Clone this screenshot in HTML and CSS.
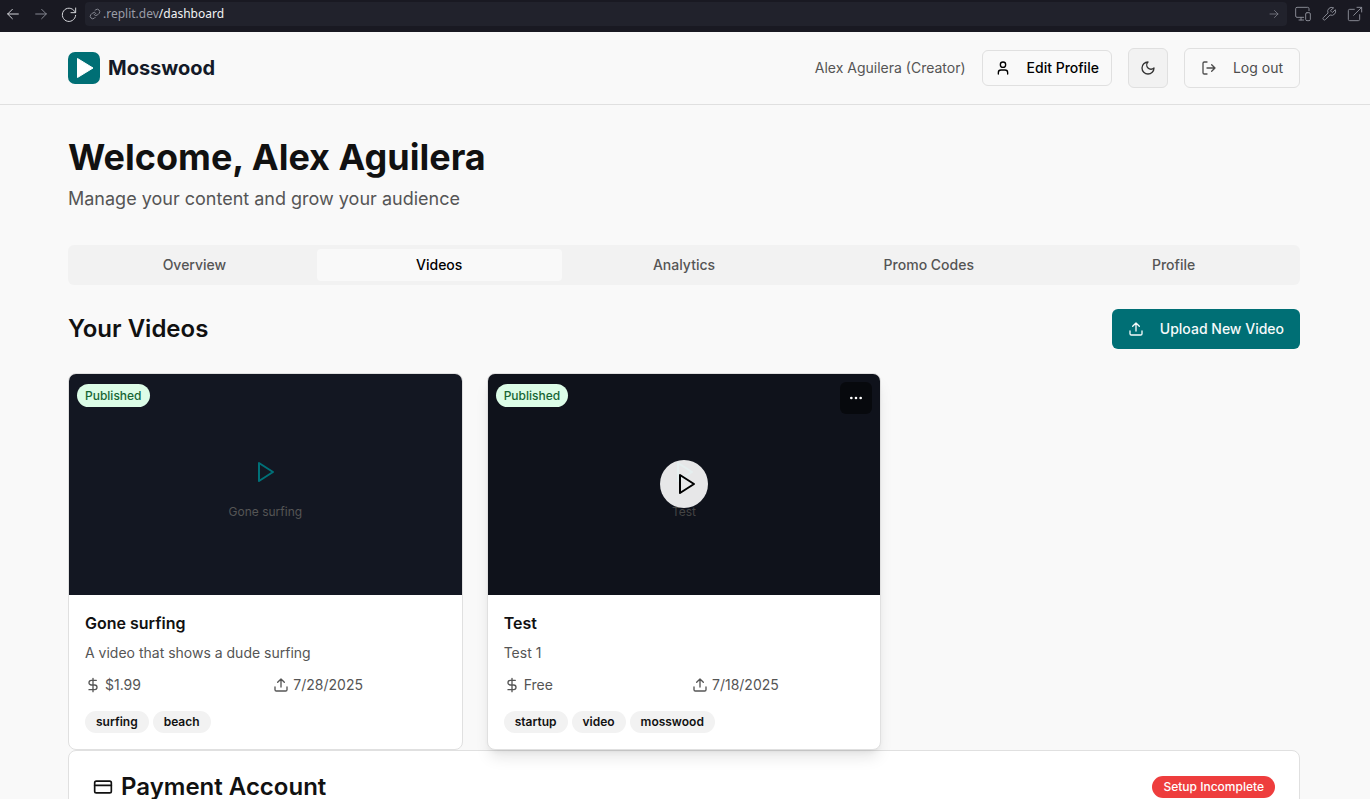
FILE: index.html
```html
<!DOCTYPE html>
<html lang="en">
<head>
<meta charset="utf-8">
<meta name="viewport" content="width=device-width, initial-scale=1">
<title>Mosswood Dashboard</title>
<link rel="stylesheet" href="styles.css">
</head>
<body>
<svg class="sprite" aria-hidden="true">
  <symbol id="play" viewBox="0 0 24 24"><polygon points="6 3 20 12 6 21 6 3"/></symbol>
  <symbol id="upload" viewBox="0 0 24 24"><path d="M12 3v12M17 8l-5-5-5 5M3 15v4a2 2 0 0 0 2 2h14a2 2 0 0 0 2-2v-4"/></symbol>
  <symbol id="dollar" viewBox="0 0 24 24"><path d="M12 2v20M17 5H9.500a3.500 3.500 0 0 0 0 7h5a3.500 3.500 0 0 1 0 7H6"/></symbol>
</svg>

<nav class="browser" aria-label="Browser">
  <button class="nav-btn" aria-label="Back"><svg class="icon bright" viewBox="0 0 24 24"><path d="M20 12H4M11 5l-7 7 7 7"/></svg></button>
  <button class="nav-btn" aria-label="Forward"><svg class="icon" viewBox="0 0 24 24"><path d="M4 12h16M13 5l7 7-7 7"/></svg></button>
  <button class="nav-btn" aria-label="Reload"><svg class="icon bright" viewBox="0 0 24 24"><path d="M22 3v7h-7"/><path d="M21.500 10A10 10 0 1 0 22 14"/></svg></button>
  <div class="address">
    <svg class="icon small" viewBox="0 0 24 24"><path d="M10 13a5 5 0 0 0 7.500.5l3-3a5 5 0 0 0-7-7l-1.700 1.700"/><path d="M14 11a5 5 0 0 0-7.500-.5l-3 3a5 5 0 0 0 7 7l1.700-1.700"/></svg>
    <span class="url">.replit.dev<span class="path">/dashboard</span></span>
    <button class="nav-btn go" aria-label="Go"><svg class="icon small" viewBox="0 0 24 24"><path d="M4 12h16M13 5l7 7-7 7"/></svg></button>
  </div>
  <div class="tools">
    <button class="nav-btn" aria-label="Devices"><svg class="icon tool" viewBox="0 0 24 24"><path d="M13 17H3a2 2 0 0 1-2-2V4a2 2 0 0 1 2-2h16a2 2 0 0 1 2 2v3M6 21h7M9 17v4"/><rect x="16" y="10" width="7" height="12" rx="2"/></svg></button>
    <button class="nav-btn" aria-label="Developer tools"><svg class="icon tool" viewBox="0 0 24 24"><path d="M14.700 6.300a1 1 0 0 0 0 1.400l1.600 1.600a1 1 0 0 0 1.400 0l3.770-3.770a6 6 0 0 1-7.940 7.940l-6.910 6.910a2.120 2.120 0 0 1-3-3l6.910-6.910a6 6 0 0 1 7.940-7.940z"/></svg></button>
    <button class="nav-btn" aria-label="Open in new tab"><svg class="icon tool" viewBox="0 0 24 24"><path d="M15 2h7v7M10 14L22 2M19 13v7a2 2 0 0 1-2 2H4a2 2 0 0 1-2-2V7a2 2 0 0 1 2-2h7"/></svg></button>
  </div>
</nav>

<div class="page">
  <header class="header">
    <a class="brand" href="#">
      <svg class="logo" viewBox="0 0 32 32"><rect width="32" height="32" rx="7"/><path d="M9.500 6.500L25 16 9.500 25.500z"/></svg>
      <span>Mosswood</span>
    </a>
    <div class="account">
      <span class="user">Alex Aguilera (Creator)</span>
      <button class="btn edit"><svg class="icon" viewBox="0 0 24 24"><circle cx="12" cy="7" r="4"/><path d="M19 21v-2a4 4 0 0 0-4-4H9a4 4 0 0 0-4 4v2"/></svg>Edit Profile</button>
      <button class="btn theme" aria-label="Toggle theme"><svg class="icon" viewBox="0 0 24 24"><path d="M12 3a6 6 0 0 0 9 9 9 9 0 1 1-9-9Z"/></svg></button>
      <button class="btn logout"><svg class="icon" viewBox="0 0 24 24"><path d="M9 21H5a2 2 0 0 1-2-2V5a2 2 0 0 1 2-2h4M16 17l5-5-5-5M21 12H9"/></svg>Log out</button>
    </div>
  </header>

  <main class="main">
    <h1>Welcome, Alex Aguilera</h1>
    <p class="subtitle">Manage your content and grow your audience</p>

    <div class="tabs" role="tablist">
      <button class="tab" role="tab">Overview</button>
      <button class="tab active" role="tab" aria-selected="true">Videos</button>
      <button class="tab" role="tab">Analytics</button>
      <button class="tab" role="tab">Promo Codes</button>
      <button class="tab" role="tab">Profile</button>
    </div>

    <div class="section-head">
      <h2>Your Videos</h2>
      <button class="btn upload"><svg class="icon"><use href="#upload"/></svg>Upload New Video</button>
    </div>

    <div class="videos">
      <article class="card">
        <div class="preview">
          <div class="placeholder">
            <span class="disc"><svg class="icon large"><use href="#play"/></svg></span>
            <span class="caption">Gone surfing</span>
          </div>
          <span class="status">Published</span>
        </div>
        <div class="details">
          <h3>Gone surfing</h3>
          <p class="desc">A video that shows a dude surfing</p>
          <div class="meta">
            <span><svg class="icon"><use href="#dollar"/></svg>$1.99</span>
            <span><svg class="icon"><use href="#upload"/></svg>7/28/2025</span>
          </div>
          <div class="tags"><span>surfing</span><span>beach</span></div>
        </div>
      </article>

      <article class="card raised">
        <div class="preview">
          <div class="placeholder">
            <span class="disc"><svg class="icon large"><use href="#play"/></svg></span>
            <span class="caption">Test</span>
          </div>
          <div class="overlay">
            <button class="play" aria-label="Play Test"><svg class="icon large"><use href="#play"/></svg></button>
          </div>
          <span class="status">Published</span>
          <button class="more" aria-label="More options"><svg class="icon" viewBox="0 0 24 24"><circle cx="5" cy="12" r="1"/><circle cx="12" cy="12" r="1"/><circle cx="19" cy="12" r="1"/></svg></button>
        </div>
        <div class="details">
          <h3>Test</h3>
          <p class="desc">Test 1</p>
          <div class="meta">
            <span><svg class="icon"><use href="#dollar"/></svg>Free</span>
            <span><svg class="icon"><use href="#upload"/></svg>7/18/2025</span>
          </div>
          <div class="tags"><span>startup</span><span>video</span><span>mosswood</span></div>
        </div>
      </article>
    </div>

    <section class="payment">
      <h2><svg class="icon" viewBox="0 0 24 24"><rect x="2" y="5" width="20" height="14" rx="2"/><path d="M2 10h20"/></svg>Payment Account</h2>
      <span class="alert">Setup Incomplete</span>
    </section>
  </main>
</div>
</body>
</html>
```
FILE: styles.css
```css
* { box-sizing: border-box; }

body {
  margin: 0;
  height: 100vh;
  display: flex;
  flex-direction: column;
  background: #f9f9f9;
  color: #111;
  font-family: Inter, "Liberation Sans", sans-serif;
  font-size: 14px;
  line-height: 20px;
}

h1, h2, h3, p { margin: 0; }
button { font: inherit; color: inherit; border: 0; padding: 0; background: none; cursor: pointer; }
.sprite { position: absolute; width: 0; height: 0; }

.icon {
  width: 16px;
  height: 16px;
  flex: none;
  fill: none;
  stroke: currentColor;
  stroke-width: 2;
  stroke-linecap: round;
  stroke-linejoin: round;
}
.icon.small { width: 12px; height: 12px; }
.icon.large { width: 24px; height: 24px; }

/* Browser bar */
.browser {
  flex: none;
  height: 32px;
  padding: 0 7px 4px 5px;
  display: flex;
  align-items: center;
  gap: 12px;
  background: #191922;
  color: #858791;
}
.nav-btn { display: flex; }
.browser .bright { color: #d4d5da; }
.browser .nav-btn .icon { stroke-width: 1.5; }
.address {
  flex: 1;
  height: 24px;
  margin-left: -4px;
  padding: 0 7px 0 4px;
  display: flex;
  align-items: center;
  gap: 2px;
  border-radius: 4px;
  background: #21222c;
  font-family: "Noto Sans", sans-serif;
  font-size: 12px;
}
.url { flex: 1; color: #9a9ca6; }
.path { color: #f2f3f5; }
.tools { display: flex; gap: 10px; margin-left: -4px; }

/* Header */
.page { flex: 1; min-height: 0; overflow-y: auto; scrollbar-width: none; }
.header {
  height: 73px;
  padding: 0 70px 0 68px;
  display: flex;
  align-items: center;
  justify-content: space-between;
  border-bottom: 1px solid #e0e0e0;
}
.brand {
  display: flex;
  align-items: center;
  gap: 8px;
  color: #141a28;
  font-size: 20px;
  font-weight: 700;
  text-decoration: none;
}
.logo { width: 32px; height: 32px; fill: #006f75; }
.logo path { fill: #fff; stroke: #fff; stroke-width: 1; stroke-linejoin: round; }
.account { display: flex; align-items: center; gap: 16px; }
.user { color: #555; }
.btn {
  height: 40px;
  display: flex;
  align-items: center;
  justify-content: center;
  gap: 16px;
  border: 1px solid #e0e0e0;
  border-radius: 6px;
}
.edit { height: 36px; padding: 0 12px; color: #000; font-weight: 500; }
.theme { width: 40px; background: #f2f2f2; color: #333; }
.logout { padding: 0 16px; color: #4d4d4d; }
.upload { padding: 0 16px; border: 0; background: #006f75; color: #f5fafa; font-weight: 500; }

/* Dashboard */
.main { padding: 32px 70px 32px 68px; }
h1 { font-size: 36px; line-height: 40px; font-weight: 700; }
.subtitle { margin-top: 8px; font-size: 18px; line-height: 28px; color: #555; }

.tabs {
  margin-top: 32px;
  padding: 4px;
  display: grid;
  grid-template-columns: repeat(5, 1fr);
  border-radius: 6px;
  background: #f2f2f2;
}
.tab { height: 32px; border-radius: 4px; color: #555; font-weight: 500; }
.tab.active { background: #f9f9f9; color: #000; }

.section-head { margin: 24px 0; display: flex; align-items: center; justify-content: space-between; }
h2 { font-size: 24px; line-height: 32px; font-weight: 600; }

.videos { display: grid; grid-template-columns: repeat(3, 1fr); gap: 24px; }
.card { border: 1px solid #e0e0e0; border-radius: 8px; background: #fff; overflow: hidden; }
.raised { position: relative; z-index: 1; box-shadow: 0 10px 15px -3px rgba(0, 0, 0, .1), 0 4px 6px -4px rgba(0, 0, 0, .1); }

.preview { position: relative; aspect-ratio: 16 / 9; background: #131722; }
.placeholder {
  height: 100%;
  display: flex;
  flex-direction: column;
  align-items: center;
  justify-content: center;
  gap: 8px;
  color: #555;
  font-size: 12px;
  line-height: 16px;
}
.disc { width: 48px; height: 48px; display: flex; align-items: center; justify-content: center; color: #007078; }
.overlay {
  position: absolute;
  inset: 0;
  display: flex;
  align-items: center;
  justify-content: center;
  background: rgba(0, 0, 0, .2);
}
.play {
  width: 48px;
  height: 48px;
  padding-left: 4px;
  display: flex;
  align-items: center;
  justify-content: center;
  border-radius: 50%;
  background: rgba(255, 255, 255, .9);
  color: #000;
}
.status {
  position: absolute;
  top: 10px;
  left: 8px;
  padding: 4px 8px 3px;
  border-radius: 12px;
  background: #dcfce7;
  color: #166534;
  font-size: 12px;
  line-height: 16px;
  font-weight: 500;
}
.more {
  position: absolute;
  top: 8px;
  right: 8px;
  width: 32px;
  height: 32px;
  display: flex;
  align-items: center;
  justify-content: center;
  border-radius: 6px;
  background: rgba(0, 0, 0, .5);
  color: #fff;
}

.details { padding: 16px; }
h3 { font-size: 16px; line-height: 24px; font-weight: 600; }
.desc { margin-top: 8px; color: #555; }
.meta { margin-top: 12px; display: grid; grid-template-columns: 1fr 1fr; gap: 16px; color: #555; }
.meta span { display: flex; align-items: center; gap: 4px; }
.tags { margin-top: 16px; display: flex; gap: 4px; }
.tags span, .alert {
  padding: 3px 11px;
  border-radius: 12px;
  background: #f2f2f2;
  font-size: 12px;
  line-height: 16px;
  font-weight: 600;
}

.payment {
  padding: 24px;
  display: flex;
  align-items: center;
  justify-content: space-between;
  border: 1px solid #e0e0e0;
  border-radius: 8px;
  background: #fff;
}
.payment h2 { display: flex; align-items: center; gap: 8px; line-height: 24px; }
.payment .icon { width: 20px; height: 20px; }
.alert { background: #ee3d3d; color: #fff; font-weight: 500; }
```
